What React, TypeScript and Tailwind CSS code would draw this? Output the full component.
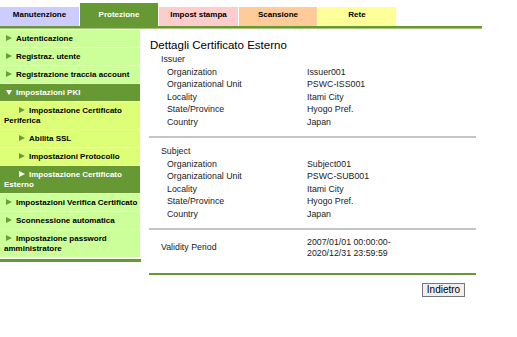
const tabs = [
  { label: "Manutenzione", bg: "bg-[#ccccff]", w: "w-[79px]" },
  { label: "Protezione", bg: "bg-[#669933]", w: "w-[78px]", active: true },
  { label: "Impost stampa", bg: "bg-[#ffcccc]", w: "w-[79px]" },
  { label: "Scansione", bg: "bg-[#ffcc99]", w: "w-[78px]" },
  { label: "Rete", bg: "bg-[#ffff99]", w: "w-[78px]" },
];

type NavItem = { label: string; sub?: boolean; dark?: boolean; open?: boolean };

const nav: NavItem[] = [
  { label: "Autenticazione" },
  { label: "Registraz. utente" },
  { label: "Registrazione traccia account" },
  { label: "Impostazioni PKI", dark: true, open: true },
  { label: "Impostazione Certificato Periferica", sub: true },
  { label: "Abilita SSL", sub: true },
  { label: "Impostazioni Protocollo", sub: true },
  { label: "Impostazione Certificato Esterno", sub: true, dark: true },
  { label: "Impostazioni Verifica Certificato" },
  { label: "Sconnessione automatica" },
  { label: "Impostazione password amministratore" },
];

const issuer = [
  ["Organization", "Issuer001"],
  ["Organizational Unit", "PSWC-ISS001"],
  ["Locality", "Itami City"],
  ["State/Province", "Hyogo Pref."],
  ["Country", "Japan"],
];

const subject = [
  ["Organization", "Subject001"],
  ["Organizational Unit", "PSWC-SUB001"],
  ["Locality", "Itami City"],
  ["State/Province", "Hyogo Pref."],
  ["Country", "Japan"],
];

function Arrow({ down, color }: { down?: boolean; color: string }) {
  return (
    <svg
      width="6"
      height="6"
      viewBox="0 0 6 6"
      className="inline-block align-[0px] mr-[4px]"
    >
      {down ? (
        <polygon points="0,1 6,1 3,6" fill={color} />
      ) : (
        <polygon points="0,0 6,3 0,6" fill={color} />
      )}
    </svg>
  );
}

function Section({ title, rows }: { title: string; rows: string[][] }) {
  return (
    <div className="leading-[12.5px]">
      <div className="pl-[12px]">{title}</div>
      <div className="pl-[18px] grid grid-cols-[140px_1fr]">
        {rows.map(([k, v]) => (
          <div key={k} className="contents">
            <div>{k}</div>
            <div>{v}</div>
          </div>
        ))}
      </div>
    </div>
  );
}

export default function App() {
  return (
    <div
      className="w-[517px] h-[337px] bg-white text-[#1a1a1a]"
      style={{ fontFamily: '"Liberation Sans", Arial, sans-serif' }}
    >
      <div className="w-[482px]">
        <div className="flex items-end gap-[1px] h-[26px]">
          {tabs.map((t) => (
            <div
              key={t.label}
              className={`${t.bg} ${t.w} text-center font-bold text-[8px] leading-[10px] ${
                t.active ? "h-[23px] pt-[7px] text-white" : "h-[19px] pt-[3px] text-black"
              }`}
            >
              {t.label}
            </div>
          ))}
        </div>
        <div className="h-[2px] bg-[#669933]" />
        <div className="h-[1px] bg-[#a6c47c]" />
      </div>

      <div className="flex mt-[1px]">
        <div className="w-[141px]">
          <div className="w-[140px] flex flex-col gap-[1px]">
            {nav.map((n) => (
              <div
                key={n.label}
                className={`pl-[4px] pr-[2px] pt-[4px] pb-[3px] text-[8px] leading-[10px] font-bold ${
                  n.dark
                    ? "bg-[#669933] text-white"
                    : n.sub
                    ? "bg-[#ddff77] text-black"
                    : "bg-[#ccff99] text-black"
                }`}
              >
                <span className={n.sub ? "ml-[15px]" : "ml-[2px]"} />
                <Arrow down={n.open} color={n.dark ? "#ffffff" : "#6f9a3a"} />
                {n.label}
              </div>
            ))}
          </div>
          <div className="mt-[2px] h-[3px] w-[141px] bg-[#669933]" />
        </div>

        <div className="ml-[8px] w-[327px] text-[8.8px]">
          <div className="pt-[8px] pl-[1px] text-[11.5px] leading-[14px] text-black">
            Dettagli Certificato Esterno
          </div>
          <div className="mt-[1px]">
            <Section title="Issuer" rows={issuer} />
          </div>
          <div className="mt-[8px] h-[2px] bg-[#c4c4c4]" />
          <div className="mt-[7px]">
            <Section title="Subject" rows={subject} />
          </div>
          <div className="mt-[8px] h-[2px] bg-[#c4c4c4]" />
          <div className="mt-[6.5px] pl-[12px] grid grid-cols-[146px_1fr] items-center leading-[11px]">
            <div>Validity Period</div>
            <div>
              <div>2007/01/01 00:00:00-</div>
              <div>2020/12/31 23:59:59</div>
            </div>
          </div>
          <div className="mt-[14.5px] h-[2px] bg-[#669933]" />
          <div className="flex justify-end pr-[11px] mt-[8px]">
            <button className="h-[14px] w-[43px] border border-[#767676] bg-[#efefef] text-[10px] leading-[12px] text-black">
              Indietro
            </button>
          </div>
        </div>
      </div>
    </div>
  );
}
